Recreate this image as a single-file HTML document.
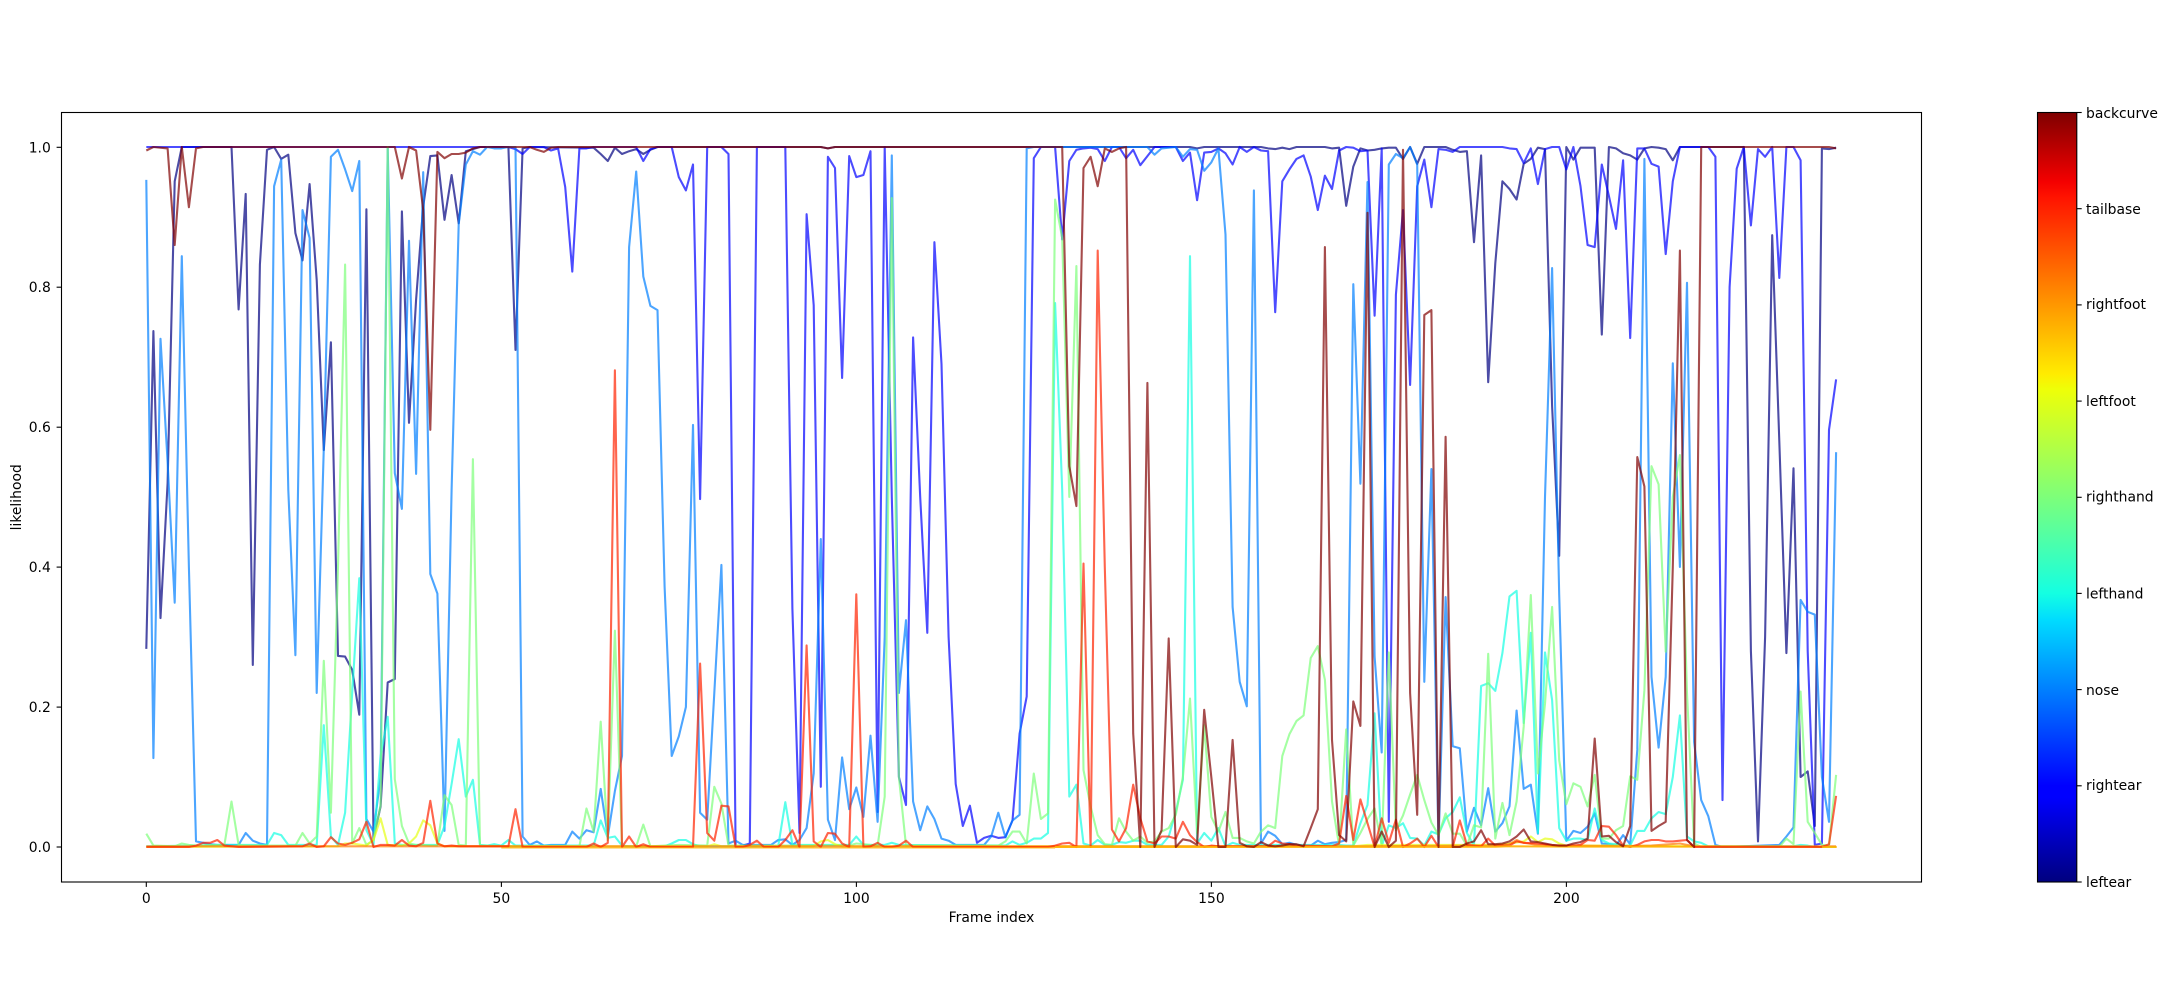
<!DOCTYPE html>
<html>
<head>
<meta charset="utf-8">
<title>likelihood</title>
<style>
html,body{margin:0;padding:0;background:#fff;width:2168px;height:990px;overflow:hidden}
svg{display:block}
text{font-family:"DejaVu Sans","Liberation Sans",sans-serif;font-size:13.9px;fill:#000}
polyline{fill:none;stroke-width:2.1;stroke-linejoin:round;stroke-opacity:.7;vector-effect:non-scaling-stroke}
</style>
</head>
<body>
<svg width="2168" height="990" viewBox="0 0 2168 990" xmlns="http://www.w3.org/2000/svg">
<defs>
<linearGradient id="jet" x1="0" y1="1" x2="0" y2="0">
<stop offset="0" stop-color="#00007f"/>
<stop offset=".11" stop-color="#0000ff"/>
<stop offset=".125" stop-color="#0000ff"/>
<stop offset=".34" stop-color="#00dbff"/>
<stop offset=".375" stop-color="#14ffe2"/>
<stop offset=".5" stop-color="#7dff7a"/>
<stop offset=".64" stop-color="#eeff08"/>
<stop offset=".66" stop-color="#ffec00"/>
<stop offset=".89" stop-color="#ff1300"/>
<stop offset=".91" stop-color="#f40000"/>
<stop offset="1" stop-color="#7f0000"/>
</linearGradient>
<clipPath id="ax"><rect x="61.5" y="112.5" width="1860" height="769.5"/></clipPath>
</defs>
<rect width="2168" height="990" fill="#fff"/>

<g clip-path="url(#ax)">
<g transform="translate(146.3,847) scale(7.1,-700)">
<!-- leftear -->
<polyline stroke="#000080" points="0,.283 1,.737 2,.327 3,.52 4,.951 5,1 12,1 13,.768 14,.933 15,.26 16,.832 17,.996 18,1 19,.983 20,.989 21,.877 22,.838 23,.947 24,.81 25,.567 26,.721 27,.273 28,.272 29,.253 30,.189 31,.911 32,.012 33,.058 34,.235 35,.24 36,.908 37,.606 38,.782 39,.915 40,.987 41,.988 42,.896 43,.96 44,.891 45,.994 46,.997 47,1 51,1 52,.71 53,.998 54,1 63,.999 64,.99 65,.98 66,.999 67,.99 68,.994 69,.997 70,.99 71,.996 72,1 95,1 96,.998 97,1 147,1 148,.998 149,1 157,1 158,.998 159,.997 160,.999 161,.997 162,1 166,1 167,.998 168,.999 169,.916 170,.972 171,.998 172,.995 173,.996 174,.998 175,.999 176,.999 177,.983 178,1 179,.976 180,1 183,1 184,.996 185,.993 186,.994 187,.864 188,.988 189,.664 190,.834 191,.951 192,.94 193,.925 194,.976 195,.983 196,.999 197,.997 198,.63 199,.416 200,1 201,.982 202,.999 204,.999 205,.732 206,1 207,.998 208,.991 209,.988 210,.982 211,.998 212,1 213,.999 214,.997 215,.981 216,1 225,1 226,.28 227,.008 228,.3 229,.874 230,.58 231,.277 232,.541 233,.1 234,.108 235,.03 236,.998 237,.997 238,.999"/>
<!-- rightear -->
<polyline stroke="#0000ff" points="0,1 51,1 52,.997 53,.99 54,1 56,1 57,.995 58,.998 59,.943 60,.822 61,.998 62,.998 63,1 69,1 70,.98 71,.997 72,1 74,1 75,.957 76,.938 77,.975 78,.497 79,1 81,1 82,.99 83,0 84,.002 85,.005 86,1 90,1 91,.34 92,.02 93,.904 94,.774 95,.086 96,.986 97,.97 98,.67 99,.987 100,.957 101,.96 102,.994 103,.05 104,1 105,.5 106,.1 107,.06 108,.728 109,.5 110,.306 111,.864 112,.69 113,.3 114,.09 115,.03 116,.059 117,.006 118,.013 119,.016 120,.013 121,.014 122,.038 123,.162 124,.215 125,.984 126,1 128,1 129,.868 130,.98 131,.996 132,.998 133,.999 134,.997 135,.98 136,1 137,1 138,.984 139,.996 140,.974 141,.987 142,1 145,1 146,.98 147,.992 148,.924 149,.992 150,.993 151,.998 152,.991 153,.975 154,1 155,.993 156,1 157,.995 158,.994 159,.764 160,.951 161,.968 162,.983 163,.988 164,.958 165,.91 166,.959 167,.94 168,.995 169,1 170,.999 171,.994 172,.995 173,.759 174,.998 175,.036 176,.789 177,.91 178,.66 179,.944 180,.982 181,.914 182,.997 183,.996 184,.993 185,1 191,1 192,.998 193,.997 194,.977 195,.998 196,.947 197,.997 198,1 199,1 200,.968 201,1 202,.944 203,.86 204,.857 205,.975 206,.93 207,.883 208,.981 209,.727 210,.998 211,.998 212,.976 213,.972 214,.847 215,.951 216,1 220,1 221,.986 222,.067 223,.8 224,.969 225,1 226,.888 227,.997 228,.986 229,1 230,.813 231,1 232,1 233,.981 234,.28 235,.003 236,.005 237,.596 238,.668"/>
<!-- nose -->
<polyline stroke="#007fff" points="0,.953 1,.127 2,.726 3,.55 4,.349 5,.844 6,.4 7,.008 8,.006 9,.004 10,.003 13,.003 14,.02 15,.009 16,.005 17,.003 18,.944 19,.982 20,.51 21,.274 22,.91 23,.87 24,.22 25,.57 26,.986 27,.996 28,.968 29,.937 30,.98 31,.04 32,.022 33,.1 34,1 35,.534 36,.483 37,.866 38,.533 39,.964 40,.39 41,.362 42,.023 43,.51 44,.89 45,.975 46,.994 47,.989 48,1 49,.998 50,.998 51,1 52,1 53,.015 54,.003 55,.008 56,.002 57,.003 59,.003 60,.022 61,.012 62,.024 63,.021 64,.083 65,.015 66,.08 67,.13 68,.857 69,.965 70,.815 71,.773 72,.767 73,.372 74,.13 75,.158 76,.2 77,.603 78,.049 79,.039 80,.22 81,.403 82,.005 83,.009 84,.003 88,.003 89,.01 90,.011 91,.003 92,.01 93,.027 94,.105 95,.44 96,.039 97,.01 98,.128 99,.054 100,.085 101,.043 102,.159 103,.036 104,.3 105,.988 106,.22 107,.324 108,.065 109,.024 110,.058 111,.04 112,.012 113,.009 114,.003 118,.003 119,.015 120,.049 121,.014 122,.038 123,.046 124,.998 125,1 141,1 142,.989 143,.998 145,1 146,.986 147,.997 148,.996 149,.966 150,.978 151,.998 152,.875 153,.343 154,.236 155,.201 156,.938 157,.005 158,.022 159,.016 160,.004 161,.006 162,.003 163,.002 164,.002 165,.009 166,.004 167,.006 168,.007 169,.01 170,.804 171,.519 172,.95 173,.272 174,.135 175,.975 176,.99 177,.984 178,1 179,.975 180,.236 181,.54 182,.003 183,.357 184,.144 185,.141 186,.022 187,.056 188,.031 189,.084 190,.022 191,.034 192,.058 193,.195 194,.083 195,.089 196,.019 197,.5 198,.827 199,.36 200,.009 201,.023 202,.02 203,.029 204,.048 205,.005 206,.004 207,.002 208,.017 209,.004 210,.139 211,.983 212,.243 213,.142 214,.243 215,.691 216,.4 217,.806 218,.15 219,.067 220,.044 221,.003 222,0 230,.003 231,.015 232,.028 233,.353 234,.336 235,.332 236,.1 237,.036 238,.564"/>
<!-- lefthand -->
<polyline stroke="#14ffe2" points="0,.001 7,.002 10,.003 17,.003 18,.02 19,.017 20,.003 24,.003 25,.174 26,.015 27,.003 28,.049 29,.22 30,.384 31,.024 32,.003 33,.13 34,.186 35,.005 36,.003 41,.003 42,.03 43,.09 44,.154 45,.072 46,.096 47,.003 48,.002 49,.004 50,.002 51,.01 52,.002 63,.002 64,.038 65,.013 66,.015 67,.002 68,.001 73,.001 74,.005 75,.01 76,.01 77,.004 78,.001 89,.001 90,.064 91,.003 99,.003 100,.015 101,.003 104,.003 105,.006 106,.003 121,.002 122,.008 123,.003 124,.006 125,.012 126,.012 127,.02 128,.777 129,.51 130,.072 131,.089 132,.005 133,.002 134,.01 135,.003 136,.003 137,.007 138,.006 139,.009 140,.009 141,.003 143,.003 144,.015 145,.05 146,.096 147,.844 148,.005 149,.02 150,.009 151,.027 152,.001 153,.006 154,.003 168,.003 169,.002 170,.002 171,.034 172,.06 173,.191 174,.001 175,.031 176,.027 177,.034 178,.013 179,.012 180,.002 181,.022 182,.018 183,.041 184,.05 185,.071 186,.02 187,.002 188,.23 189,.234 190,.223 191,.277 192,.358 193,.366 194,.177 195,.306 196,.02 197,.278 198,.21 199,.027 200,.009 201,.012 202,.012 203,.01 204,.055 205,.01 206,.005 207,.004 208,.002 209,.002 210,.023 211,.023 212,.041 213,.05 214,.047 215,.1 216,.188 217,.015 218,.008 219,.006 220,.001 232,.001 233,.003 234,.002 235,0 238,0"/>
<!-- righthand -->
<polyline stroke="#7dff7a" points="0,.019 1,.002 4,.001 5,.005 6,.003 7,.002 11,.003 12,.065 13,.003 14,.002 21,.002 22,.02 23,.005 24,.015 25,.266 26,.049 27,.4 28,.832 29,.005 30,.027 31,.003 32,.01 33,.06 34,1 35,.097 36,.03 37,.005 38,.003 39,.003 40,.002 41,.002 42,.074 43,.06 44,.003 45,.002 46,.554 47,.002 52,.001 61,.001 62,.055 63,.022 64,.179 65,.01 66,.309 67,.001 69,.001 70,.032 71,.001 75,.003 79,.002 80,.086 81,.062 82,.002 99,.002 100,.005 103,.002 104,.072 105,.927 106,.1 107,.002 120,.002 121,.008 122,.022 123,.022 124,.005 125,.105 126,.04 127,.048 128,.925 129,.87 130,.5 131,.83 132,.11 133,.058 134,.017 135,.004 136,.003 137,.041 138,.022 139,.009 140,.015 141,.006 142,.008 143,.022 144,.027 145,.046 146,.1 147,.212 148,.02 149,.174 150,.043 151,.022 152,.05 153,.013 154,.013 155,.008 156,.005 157,.022 158,.031 159,.027 160,.13 161,.161 162,.18 163,.188 164,.27 165,.287 166,.239 167,.065 168,.002 169,.168 170,.002 171,.02 172,.04 173,.055 174,.002 175,.278 176,.024 177,.045 178,.075 179,.103 180,.067 181,.035 182,.017 183,.048 184,.019 185,.019 186,.002 187,.031 188,.028 189,.276 190,.012 191,.063 192,.017 193,.065 194,.172 195,.36 196,.105 197,.205 198,.343 199,.124 200,.061 201,.091 202,.086 203,.058 204,.103 205,.012 206,.012 207,.024 208,.03 209,.101 210,.096 211,.224 212,.544 213,.518 214,.279 215,.5 216,.56 217,.22 218,.005 219,0 230,0 231,.012 232,.004 233,.222 234,.036 235,.02 236,.003 237,.002 238,.103"/>
<!-- leftfoot -->
<polyline stroke="#e6ff14" points="0,0 27,.001 28,.005 29,.005 31,.002 32,.01 33,.041 34,.003 36,.002 37,.005 38,.015 39,.038 40,.031 41,.005 42,.001 79,.001 80,.004 81,.001 94,.001 95,.008 96,.01 97,.004 98,.001 170,.001 172,.003 190,.003 192,.005 194,.008 195,.015 196,.007 197,.012 198,.011 199,.005 200,.002 205,.002 218,.001 238,0"/>
<!-- rightfoot -->
<polyline stroke="#ff7b00" points="0,.001 170,.001 190,.002 192,.004 193,.01 194,.006 196,.003 199,.002 201,.002 208,.001 212,.002 216,.005 218,.001 238,.001"/>
<!-- tailbase -->
<polyline stroke="#ff2200" points="0,0 6,0 7,.002 8,.006 9,.006 10,.01 11,.002 12,.001 13,0 22,.001 23,.005 24,0 25,.001 26,.014 27,.005 28,.003 29,.006 30,.011 31,.036 32,0 33,.003 34,.003 35,.002 36,.01 37,.002 38,.001 39,.006 40,.066 41,.005 42,.001 43,.002 44,.001 51,.001 52,.054 53,0 62,0 63,.005 64,0 65,.006 66,.681 67,0 68,.015 69,0 70,.004 71,0 77,0 78,.262 79,.02 80,.009 81,.059 82,.058 83,0 84,0 85,.003 86,.009 87,0 89,0 90,.01 91,.024 92,0 93,.288 94,.008 95,0 96,.02 97,.019 98,.005 99,0 100,.361 101,0 102,.001 103,.006 104,0 105,0 106,.002 107,.009 108,0 127,0 128,.002 129,.005 130,.006 131,0 132,.405 133,0 134,.852 135,.4 136,.025 137,.008 138,.027 139,.089 140,.041 141,.008 142,.005 143,.015 144,.015 145,.012 146,.036 147,.017 148,.007 149,0 150,.002 151,.001 158,.001 159,.009 160,.005 161,.004 162,.002 167,.001 168,.005 169,.073 170,.01 171,.068 172,.034 173,0 174,.041 175,.006 176,.039 177,0 178,.005 179,.012 180,0 181,.016 182,0 184,0 185,.038 186,.003 187,.002 188,.001 189,.012 190,.002 192,.002 193,.008 194,.006 196,.005 197,.004 198,.002 201,.002 202,.003 203,.01 204,.009 205,.03 206,.029 207,.017 208,.002 209,0 210,.003 211,.008 212,.01 213,.01 214,.008 215,.008 216,.009 217,.01 218,0 236,0 237,.004 238,.073"/>
<!-- orange baseline visible over the zero line -->
<polyline style="stroke:#ffb000;stroke-opacity:.8;stroke-width:1.2" points="50,-.0012 128,-.0012"/>
<polyline style="stroke:#ffb000;stroke-opacity:.9;stroke-width:2" points="128,0 190,.0003 192,.001 200,.0005 218,.0005"/>
<polyline style="stroke:#ffb000;stroke-opacity:.85;stroke-width:1.8" points="236,0 238.1,0"/>
<!-- backcurve -->
<polyline stroke="#800000" points="0,.995 1,1 3,.998 4,.86 5,1 6,.914 7,.998 8,1 35,1 36,.955 37,1 38,.995 39,.91 40,.596 41,.993 42,.984 43,.99 44,.99 45,.992 46,.998 47,1 54,1 55,.996 56,.993 57,.999 58,1 95,1 96,.998 97,1 129,1 130,.544 131,.487 132,.97 133,.986 134,.944 135,.998 136,.993 137,.998 138,1 139,.162 140,0 141,.663 142,0 143,.024 144,.298 145,0 146,.011 147,.009 148,.003 149,.196 150,.1 151,0 152,0 153,.153 154,.006 155,.001 156,0 157,.007 158,.002 159,.001 160,.002 161,.004 162,.004 163,.001 164,.027 165,.054 166,.857 167,.153 168,.017 169,.008 170,.208 171,.173 172,.906 173,0 174,.022 175,0 176,.009 177,.996 178,.22 179,.046 180,.76 181,.767 182,0 183,.586 184,0 185,0 186,.005 187,.008 188,.024 189,.004 190,.004 191,.005 192,.008 193,.015 194,.025 195,.008 196,.007 197,.005 198,.003 199,.002 200,.002 201,.005 202,.007 203,.012 204,.155 205,.015 206,.016 207,.007 208,.001 209,.03 210,.557 211,.515 212,.023 213,.03 214,.036 215,.4 216,.852 217,.01 218,0 219,1 237,1 238,.998"/>
</g>
</g>

<!-- axes frame -->
<rect x="61.5" y="112.5" width="1860" height="769.5" fill="none" stroke="#000" stroke-width="1.1"/>

<!-- y ticks -->
<g stroke="#000" stroke-width="1.1">
<line x1="56.6" x2="61.5" y1="147.3" y2="147.3"/>
<line x1="56.6" x2="61.5" y1="287.2" y2="287.2"/>
<line x1="56.6" x2="61.5" y1="427.2" y2="427.2"/>
<line x1="56.6" x2="61.5" y1="567.1" y2="567.1"/>
<line x1="56.6" x2="61.5" y1="707.1" y2="707.1"/>
<line x1="56.6" x2="61.5" y1="847" y2="847"/>
<!-- x ticks -->
<line y1="882" y2="886.9" x1="146.3" x2="146.3"/>
<line y1="882" y2="886.9" x1="501.4" x2="501.4"/>
<line y1="882" y2="886.9" x1="856.4" x2="856.4"/>
<line y1="882" y2="886.9" x1="1211.4" x2="1211.4"/>
<line y1="882" y2="886.9" x1="1566.4" x2="1566.4"/>
</g>
<g text-anchor="end">
<text x="50.8" y="152.3">1.0</text>
<text x="50.8" y="292.2">0.8</text>
<text x="50.8" y="432.2">0.6</text>
<text x="50.8" y="572.1">0.4</text>
<text x="50.8" y="712.1">0.2</text>
<text x="50.8" y="852">0.0</text>
</g>
<g text-anchor="middle">
<text x="146.3" y="903">0</text>
<text x="501.4" y="903">50</text>
<text x="856.4" y="903">100</text>
<text x="1211.4" y="903">150</text>
<text x="1566.4" y="903">200</text>
<text x="991.5" y="922">Frame index</text>
<text transform="translate(21,497.3) rotate(-90)">likelihood</text>
</g>

<!-- colorbar -->
<rect x="2037.5" y="112.5" width="39.3" height="769.5" fill="url(#jet)" stroke="#000" stroke-width="1.1"/>
<g stroke="#000" stroke-width="1.1">
<line x1="2076.8" x2="2081.7" y1="112.5" y2="112.5"/>
<line x1="2076.8" x2="2081.7" y1="208.7" y2="208.7"/>
<line x1="2076.8" x2="2081.7" y1="304.9" y2="304.9"/>
<line x1="2076.8" x2="2081.7" y1="401.1" y2="401.1"/>
<line x1="2076.8" x2="2081.7" y1="497.3" y2="497.3"/>
<line x1="2076.8" x2="2081.7" y1="593.4" y2="593.4"/>
<line x1="2076.8" x2="2081.7" y1="689.6" y2="689.6"/>
<line x1="2076.8" x2="2081.7" y1="785.8" y2="785.8"/>
<line x1="2076.8" x2="2081.7" y1="882" y2="882"/>
</g>
<text x="2086" y="118">backcurve</text>
<text x="2086" y="214">tailbase</text>
<text x="2086" y="309">rightfoot</text>
<text x="2086" y="406">leftfoot</text>
<text x="2086" y="501.5">righthand</text>
<text x="2086" y="598.5">lefthand</text>
<text x="2086" y="695">nose</text>
<text x="2086" y="790">rightear</text>
<text x="2086" y="887">leftear</text>
</svg>
</body>
</html>
